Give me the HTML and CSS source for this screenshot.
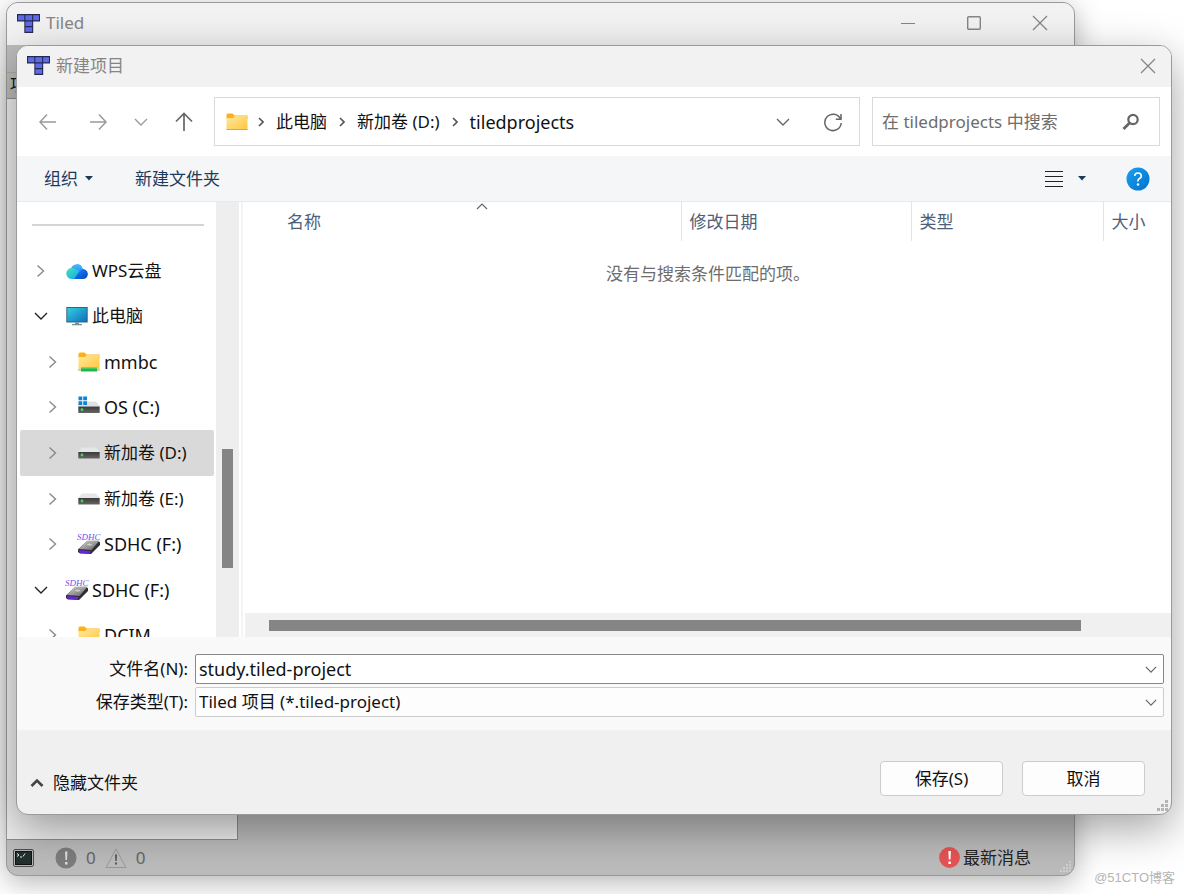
FILE: index.html
```html
<!DOCTYPE html>
<html lang="zh-CN">
<head>
<meta charset="utf-8">
<title>Tiled</title>
<link rel="stylesheet" href="styles.css">
</head>
<body>
<svg class="sprite" aria-hidden="true">
  <defs>
    <linearGradient id="gFolder" x1="0" y1="0" x2="1" y2="1"><stop offset="0" stop-color="#ffe8a0"/><stop offset="1" stop-color="#ffc73d"/></linearGradient>
    <linearGradient id="gScreen" x1="0" y1="0" x2="1" y2="1"><stop offset="0" stop-color="#33cfe0"/><stop offset="1" stop-color="#0f6fbf"/></linearGradient>
    <linearGradient id="gDisk" x1="0" y1="0" x2="0" y2="1"><stop offset="0" stop-color="#3a3a3a"/><stop offset="1" stop-color="#666"/></linearGradient>
    <linearGradient id="gCloudA" x1="0" y1="0" x2="1" y2="1"><stop offset="0" stop-color="#45e3b4"/><stop offset="1" stop-color="#12a5f2"/></linearGradient>
    <linearGradient id="gCloudB" x1="0" y1="0" x2="0" y2="1"><stop offset="0" stop-color="#4cb8ff"/><stop offset="1" stop-color="#1285f5"/></linearGradient>
    <linearGradient id="gCloudC" x1="0" y1="0" x2="1" y2="1"><stop offset="0" stop-color="#1a8bff"/><stop offset="1" stop-color="#0641c4"/></linearGradient>
    <linearGradient id="gCard" x1="0" y1="0" x2="1" y2="1"><stop offset="0" stop-color="#ddd"/><stop offset="1" stop-color="#5c5c5c"/></linearGradient>
    <linearGradient id="gHelp" x1="0" y1="0" x2="1" y2="1"><stop offset="0" stop-color="#1ba1ee"/><stop offset="1" stop-color="#0071ce"/></linearGradient>
    <symbol id="logo" viewBox="0 0 22 18">
      <path d="M0 0H22V7H15.500V18H7V7H0Z" fill="#24284f"/>
      <path d="M1 1H7V6H1ZM8 1H14.500V6H8ZM15.500 1H21V6H15.500ZM8 7H14.500V11.500H8ZM8 12.500H14.500V17H8Z" fill="#5f6be6"/>
    </symbol>
    <symbol id="folder" viewBox="0 0 22 18">
      <path d="M.5 2Q.5.5 2 .5H6.500L8.500 2.500H21.500V6H.5Z" fill="#fbb117"/>
      <path d="M.5 5H7L9 3H21.500V16.500H.5Z" fill="url(#gFolder)"/><path d="M.5 16H21.500V17H.5Z" fill="#efa51b"/>
    </symbol>
    <symbol id="netfolder" viewBox="0 0 22 20">
      <path d="M.5 2Q.5.5 2 .5H6.500L8.500 2.500H21.500V6H.5Z" fill="#fbb117"/>
      <path d="M.5 5H7L9 3H21.500V17H.5Z" fill="url(#gFolder)"/><path d="M0 17.500H22V18.500H0Z" fill="#8aa0aa"/>
      <path d="M3 15H19V19.500H3Z" fill="#25b34e"/><path d="M3 15H19V16.500H3Z" fill="#5ee07c"/>
    </symbol>
    <symbol id="cloud" viewBox="0 0 22 18">
      <path d="M5 7A6 6 0 0 1 16.500 6L18 9 10 13Z" fill="url(#gCloudB)"/>
      <path d="M6 6Q9.500 6 12 8.500L14.500 11 9 17H5.500A5.500 5.500 0 0 1 6 6Z" fill="url(#gCloudA)"/>
      <path d="M8 17 13 10Q16 6 19 7.500A5 5 0 0 1 17 17Z" fill="url(#gCloudC)"/>
    </symbol>
    <symbol id="pc" viewBox="0 0 22 19">
      <path d="M.3.500H21.700V16H.3Z" fill="#35627d"/><path d="M1.300 1.500H20.700V15H1.300Z" fill="url(#gScreen)"/>
      <path d="M9 16H13V17.500H16V18.700H6V17.500H9Z" fill="#7c8a93"/>
    </symbol>
    <symbol id="disk" viewBox="0 0 22 12">
      <path d="M4 .5H18L22 5H0Z" fill="#e4e6e8"/><path d="M.3 5H21.700V11.500H.3Z" fill="url(#gDisk)"/>
      <circle cx="4" cy="8" r="1.400" fill="#3ddc55"/>
    </symbol>
    <symbol id="windisk" viewBox="0 0 22 18">
      <path d="M6 5.500H18L22 10.500H0V9H6Z" fill="#dfe1e4"/><path d="M.3 10.500H21.700V17H.3Z" fill="url(#gDisk)"/>
      <circle cx="4" cy="13.700" r="1.400" fill="#3ddc55"/>
      <path d="M.5.500H4.300V4.300H.5ZM5.200.500H9V4.300H5.200ZM.5 5.200H4.300V9H.5ZM5.200 5.200H9V9H5.200Z" fill="#0d84d8"/>
    </symbol>
    <symbol id="card" viewBox="0 0 24 22">
      <path d="M10 8 22 8.500Q23.500 9 23 10V12L14 21 3 20.500 1 19V16.500Z" fill="#2e2e34"/>
      <path d="M10 7.500H22.500L14.500 17 2 16Z" fill="url(#gCard)"/><path d="M1.500 17 13.500 18 13 20.500 3 19.700Z" fill="#6926d6"/>
      <ellipse cx="12.500" cy="11.500" rx="3" ry="1.600" fill="#ccc" stroke="#888" stroke-width=".7"/>
      <text x="0" y="7" class="sdhc">SDHC</text>
    </symbol>
    <symbol id="right" viewBox="0 0 10 14"><path d="M1.500 1.500 7.500 7 1.500 12.500" fill="none" stroke="currentColor" stroke-width="1.400"/></symbol>
    <symbol id="down" viewBox="0 0 14 10"><path d="M1 2 7 8 13 2" fill="none" stroke="currentColor" stroke-width="1.400"/></symbol>
    <symbol id="close" viewBox="0 0 16 16"><path d="M1 1 15 15M15 1 1 15" fill="none" stroke="currentColor" stroke-width="1.300"/></symbol>
  </defs>
</svg>

<main class="desktop">
  <section class="window app" aria-label="Tiled">
    <header class="titlebar app-title">
      <svg class="logo"><use href="#logo"/></svg>
      <h1 class="title">Tiled</h1>
      <div class="window-controls">
        <button class="icon-button" aria-label="最小化"><svg width="16" height="16"><path d="M1 8.500H15" stroke="currentColor"/></svg></button>
        <button class="icon-button" aria-label="最大化"><svg width="16" height="16"><rect x="1.700" y="1.700" width="12.600" height="12.600" rx="1" fill="none" stroke="currentColor" stroke-width="1.400"/></svg></button>
        <button class="icon-button" aria-label="关闭"><svg width="16" height="16"><use href="#close"/></svg></button>
      </div>
    </header>
    <div class="app-tools"></div>
    <h2 class="dock-title">项目</h2>
    <div class="dock"></div>
    <footer class="status">
      <button class="icon-button" aria-label="控制台"><svg width="21" height="18"><rect x=".7" y=".7" width="19.600" height="16.600" rx="1" fill="#d8d8d8" stroke="#333"/><rect x="2.500" y="2.500" width="16" height="13" fill="#24302e" stroke="#111"/><path d="M4 4.500 6 6 4 7.500M7 8H9M10 7.500 12 4.500" stroke="#eee" fill="none"/></svg></button>
      <span class="count errors"><svg width="22" height="22"><circle cx="11" cy="11" r="10.500" fill="#7d7d7d"/><path d="M10 4.500H12.500L12 13H10.500ZM10 15H12.500V17.500H10Z" fill="#ddd"/></svg>0</span>
      <span class="count"><svg width="22" height="22"><path d="M11 2 21 20.500H1Z" fill="#bcbcbc" stroke="#9a9a9a" stroke-linejoin="round"/><path d="M10 7.500H12L11.700 14H10.300ZM10 15.500H12V17.500H10Z" fill="#555"/></svg>0</span>
      <button class="news"><svg width="21" height="21"><circle cx="10.500" cy="10.500" r="10.400" fill="#e75353"/><path d="M9.300 4H12L11.500 12.500H9.800ZM9.400 14.500H11.900V17H9.400Z" fill="#fff"/></svg>最新消息</button>
      <svg class="grip" width="12" height="12" fill="#d0d0d0"><path d="M9 0h2v2H9zM6 3h2v2H6zM9 3h2v2H9zM3 6h2v2H3zM6 6h2v2H6zM9 6h2v2H9zM0 9h2v2H0zM3 9h2v2H3zM6 9h2v2H6zM9 9h2v2H9z"/></svg>
    </footer>
  </section>

  <section class="window dialog" role="dialog" aria-label="新建项目">
    <header class="titlebar">
      <svg class="logo"><use href="#logo"/></svg>
      <h2 class="title">新建项目</h2>
      <div class="window-controls"><button class="icon-button" aria-label="关闭"><svg width="16" height="16"><use href="#close"/></svg></button></div>
    </header>

    <nav class="navbar" aria-label="导航">
      <div class="history">
        <button class="icon-button" aria-label="后退"><svg width="18" height="18" fill="none" stroke="currentColor" stroke-width="1.500"><path d="M17 9H1M8 1.500 1 9 8 16.500"/></svg></button>
        <button class="icon-button" aria-label="前进"><svg width="18" height="18" fill="none" stroke="currentColor" stroke-width="1.500"><path d="M1 9H17M10 1.500 17 9 10 16.500"/></svg></button>
        <button class="icon-button recent" aria-label="最近"><svg width="14" height="10"><use href="#down"/></svg></button>
        <button class="icon-button up" aria-label="向上"><svg width="18" height="20" fill="none" stroke="currentColor" stroke-width="1.700"><path d="M9 19V1.500M1 9.500 9 1.500 17 9.500"/></svg></button>
      </div>
      <div class="address">
        <svg width="22" height="18"><use href="#folder"/></svg>
        <ol class="crumbs">
          <li><svg class="crumb-arrow"><path d="M1 1 5 5 1 9"/></svg><a href="#pc">此电脑</a></li>
          <li><svg class="crumb-arrow"><path d="M1 1 5 5 1 9"/></svg><a href="#d">新加卷 (D:)</a></li>
          <li><svg class="crumb-arrow"><path d="M1 1 5 5 1 9"/></svg><a class="latin" href="#t">tiledprojects</a></li>
        </ol>
        <button class="icon-button" aria-label="历史记录"><svg width="16" height="10" viewBox="0 0 14 10"><use href="#down"/></svg></button>
        <button class="icon-button" aria-label="刷新"><svg width="20" height="20" fill="none" stroke="currentColor" stroke-width="1.500"><path d="M17.500 7A8.200 8.200 0 1 0 18.200 11M18 2V7.200H12.800"/></svg></button>
      </div>
      <div class="search">
        <input type="search" aria-label="搜索" placeholder="在 tiledprojects 中搜索">
        <svg width="18" height="18" fill="none" stroke="#666"><circle cx="11" cy="6.500" r="4.700" stroke-width="2.200"/><path d="M7.500 10 1.500 16" stroke-width="2.800"/></svg>
      </div>
    </nav>

    <div class="toolbar">
      <button class="tool organize">组织<svg width="8" height="5"><path d="M0 0H8L4 4.500Z" fill="currentColor"/></svg></button>
      <button class="tool">新建文件夹</button>
      <button class="tool view" aria-label="更改视图"><svg width="18" height="17" stroke="#222"><path d="M0 1.500H18M0 6.500H18M0 11.500H18M0 16.500H18"/></svg><svg width="8" height="5"><path d="M0 0H8L4 4.500Z" fill="currentColor"/></svg></button>
      <button class="icon-button" aria-label="帮助"><svg width="24" height="24"><circle cx="12" cy="12" r="11.500" fill="url(#gHelp)"/><path d="M8.700 9Q8.800 6 12 6T15.300 9Q15.300 10.600 13.500 11.600T12 14.500" fill="none" stroke="#fff" stroke-width="1.700"/><circle cx="12" cy="17.500" r="1.200" fill="#fff"/></svg></button>
    </div>

    <div class="browser">
      <aside class="tree-pane">
        <div class="tree-view">
          <hr class="tree-rule">
          <ul class="tree">
            <li class="node"><svg class="expander"><use href="#right"/></svg><svg class="node-icon"><use href="#cloud"/></svg>WPS云盘</li>
            <li class="node open"><svg class="expander"><use href="#down"/></svg><svg class="node-icon"><use href="#pc"/></svg>此电脑</li>
            <li class="node child latin"><svg class="expander"><use href="#right"/></svg><svg class="node-icon"><use href="#netfolder"/></svg>mmbc</li>
            <li class="node child latin"><svg class="expander"><use href="#right"/></svg><svg class="node-icon raised"><use href="#windisk"/></svg>OS (C:)</li>
            <li class="node child selected"><svg class="expander"><use href="#right"/></svg><svg class="node-icon"><use href="#disk"/></svg>新加卷 (D:)</li>
            <li class="node child"><svg class="expander"><use href="#right"/></svg><svg class="node-icon"><use href="#disk"/></svg>新加卷 (E:)</li>
            <li class="node child latin"><svg class="expander"><use href="#right"/></svg><svg class="node-icon card"><use href="#card"/></svg>SDHC (F:)</li>
            <li class="node open latin"><svg class="expander"><use href="#down"/></svg><svg class="node-icon card"><use href="#card"/></svg>SDHC (F:)</li>
            <li class="node child latin"><svg class="expander"><use href="#right"/></svg><svg class="node-icon"><use href="#folder"/></svg>DCIM</li>
          </ul>
        </div>
        <div class="vscroll"><div class="vthumb"></div></div>
      </aside>
      <div class="files">
        <table class="file-table">
          <thead><tr>
            <th class="name">名称<svg class="sort" width="12" height="7"><path d="M1 6 6 1 11 6" fill="none" stroke="#666" stroke-width="1.200"/></svg></th>
            <th class="date">修改日期</th><th class="type">类型</th><th class="size">大小</th>
          </tr></thead>
          <tbody><tr><td colspan="4">没有与搜索条件匹配的项。</td></tr></tbody>
        </table>
        <div class="hscroll"><div class="hthumb"></div></div>
      </div>
    </div>

    <form class="fields">
      <label for="filename">文件名(N):</label>
      <div class="combo strong"><input id="filename" class="latin" type="text" value="study.tiled-project"><svg class="combo-arrow"><use href="#down"/></svg></div>
      <label for="filetype">保存类型(T):</label>
      <div class="combo"><select id="filetype"><option>Tiled 项目 (*.tiled-project)</option></select><svg class="combo-arrow"><use href="#down"/></svg></div>
    </form>

    <footer class="actions">
      <button class="hide-folders"><svg width="14" height="10"><path d="M1.500 8 7 2.500 12.500 8" fill="none" stroke="#444" stroke-width="2.600"/></svg>隐藏文件夹</button>
      <button class="push">保存(S)</button>
      <button class="push">取消</button>
      <svg class="grip" width="12" height="12" fill="#b4b4b4"><path d="M8 0h3v3H8zM4 4h3v3H4zM8 4h3v3H8zM0 8h3v3H0zM4 8h3v3H4zM8 8h3v3H8z"/></svg>
    </footer>
  </section>
  <span class="watermark">@51CTO博客</span>
</main>
</body>
</html>
```
FILE: styles.css
```css
* { box-sizing: border-box; }
body {
  margin: 0;
  font-family: "Noto Sans", "Noto Sans CJK SC", sans-serif;
  font-size: 17px;
  line-height: 24px;
  color: #111;
}
button, input, select { font: inherit; color: inherit; margin: 0; padding: 0; border: 0; background: none; }
svg { flex: none; display: block; }
h1, h2, ul, ol, li { margin: 0; padding: 0; list-style: none; font-size: inherit; font-weight: 400; }
a { color: inherit; text-decoration: none; }
.latin { font-size: 18px; }
.sprite { position: absolute; width: 0; height: 0; }
.sdhc { font: italic 9px "Liberation Serif", serif; fill: #6a55f0; }

.desktop { position: relative; height: 100vh; min-height: 600px; overflow: hidden; background: #fff; }
.window { position: absolute; display: flex; flex-direction: column; border: 1px solid #9a9a9a; border-radius: 12px; overflow: hidden; }
.app { inset: 2px 109px 18px 6px; background: #bcbcbc; box-shadow: 0 6px 28px rgba(0, 0, 0, .3); }
.dialog { inset: 45px 12px 79px 16px; background: #f0f0f0; box-shadow: 0 14px 44px rgba(0, 0, 0, .36); }

.titlebar { display: flex; align-items: center; height: 41px; flex: none; padding: 0 15px 2px 10px; background: #f2f2f2; color: #858585; }
.logo { width: 23px; height: 19px; margin-right: 6px; }
.window-controls { display: flex; gap: 50px; margin-left: auto; }
.icon-button { display: flex; align-items: center; justify-content: center; }

.app-title { padding-right: 26px; height: 42px; }
.app-tools { height: 28px; border-bottom: 1px solid #a8a8a8; }
.dock-title { height: 25px; padding-left: 3px; }
.dock { flex: 1; width: 231px; background: #eee; border: 1px solid #8c8c8c; border-left: 0; }
.status { position: relative; display: flex; align-items: center; height: 35px; flex: none; padding: 0 43px 0 6px; color: #666; }
.count { display: flex; align-items: center; gap: 9px; margin-right: 9px; }
.errors { margin-left: 21px; }
.news { display: flex; align-items: center; gap: 3px; margin-left: auto; color: #222; }
.grip { position: absolute; right: 2px; bottom: 2px; }

.navbar { display: flex; align-items: center; gap: 12px; height: 69px; flex: none; padding: 0 11px 0 22px; background: #fff; }
.history { display: flex; align-items: center; width: 163px; color: #9b9b9b; }
.history .icon-button + .icon-button { margin-left: 32px; }
.history .recent + .up, .history .icon-button + .recent { margin-left: 27px; }
.history .up { color: #666; }
.address { display: flex; align-items: center; flex: 1; gap: 10px; height: 49px; padding: 0 16px 0 11px; border: 1px solid #d9d9d9; color: #666; }
.address .icon-button + .icon-button { margin-left: 22px; }
.crumbs { display: flex; flex: 1; gap: 12px; color: #111; }
.crumbs li { display: flex; align-items: center; gap: 12px; }
.crumb-arrow { width: 6px; height: 10px; fill: none; stroke: #555; stroke-width: 1.6; }
.search { display: flex; align-items: center; width: 288px; height: 49px; padding: 0 19px 0 9px; border: 1px solid #d9d9d9; }
.search input { flex: 1; min-width: 0; outline: 0; }
.search input::placeholder { color: #6d6d6d; opacity: 1; }

.toolbar { display: flex; align-items: center; height: 46px; flex: none; padding: 0 21px 0 27px; gap: 40px; background: #f4f6f8; border-bottom: 1px solid #e7e9eb; color: #1e395b; }
.tool { display: flex; align-items: center; gap: 7px; }
.organize { padding-right: 2px; }
.view { gap: 15px; margin-left: auto; }

.browser { display: flex; flex: 1; min-height: 0; background: #fff; }
.tree-pane { display: flex; width: 226px; flex: none; border-right: 2px solid #f4f4f4; }
.tree-view { width: 199px; overflow: hidden; }
.tree-rule { margin: 22px 12px 22px 15px; border: 0; border-top: 2px solid #d4d4d4; }
.tree { display: grid; grid-auto-rows: 1fr; height: 410px; padding: 0 2px 0 3px; }
.node { display: flex; align-items: center; padding-left: 14px; white-space: nowrap; border-radius: 2px; }
.child { padding-left: 26px; }
.selected { background: #d9d9d9; }
.expander { width: 14px; height: 14px; margin-right: 18px; color: #8a8a8a; }
.open .expander { color: #222; }
.node-icon { width: 22px; height: 20px; margin-right: 4px; }
.card { width: 24px; height: 22px; margin: 0 3px 0 -1px; }
.raised { margin-bottom: 4px; }
.vscroll { width: 23px; padding: 247px 6px 69px; background: #eee; }
.vthumb { height: 100%; background: #858585; }
.files { display: flex; flex-direction: column; flex: 1; min-width: 0; padding-left: 2px; }
.file-table { width: 100%; table-layout: fixed; border-collapse: collapse; color: #4c607a; }
.file-table th { position: relative; height: 39px; padding: 0 0 0 8px; font-weight: 400; text-align: left; border-left: 1px solid #e4e4e4; }
.file-table .name { padding-left: 42px; border-left: 0; }
.date { width: 230px; }
.type { width: 192px; }
.size { width: 68px; }
.sort { position: absolute; top: 1px; left: 53%; }
.file-table td { padding: 21px 8px; text-align: center; color: #6d6d6d; }
.hscroll { height: 24px; margin-top: auto; padding: 7px 90px 6px 24px; background: #f0f0f0; }
.hthumb { height: 100%; background: #858585; }

.fields { display: grid; grid-template-columns: 171px 1fr; gap: 3px 7px; flex: none; align-items: center; padding: 17px 7px 13px 0; background: #f9f9f9; }
.fields label { text-align: right; }
.combo { position: relative; display: flex; height: 30px; border: 1px solid #ccc; border-radius: 2px; background: #fdfdfd; }
.strong { border-color: #888; background: #fff; }
.combo input, .combo select { width: 100%; padding: 0 30px 0 3px; appearance: none; outline: 0; }
.combo-arrow { position: absolute; right: 6px; top: 10px; width: 12px; height: 9px; color: #666; pointer-events: none; }

.actions { position: relative; display: flex; align-items: flex-start; gap: 19px; height: 84px; flex: none; padding: 31px 26px 0 13px; }
.hide-folders { display: flex; align-items: center; gap: 9px; margin: 10px auto 0 0; }
.push { width: 123px; height: 35px; background: #fdfdfd; border: 1px solid #ccc; border-radius: 4px; }
.watermark { position: absolute; right: 9px; bottom: 6px; font: 13px/20px "Liberation Sans", "Noto Sans CJK SC", sans-serif; color: #b5b5b5; }
```
